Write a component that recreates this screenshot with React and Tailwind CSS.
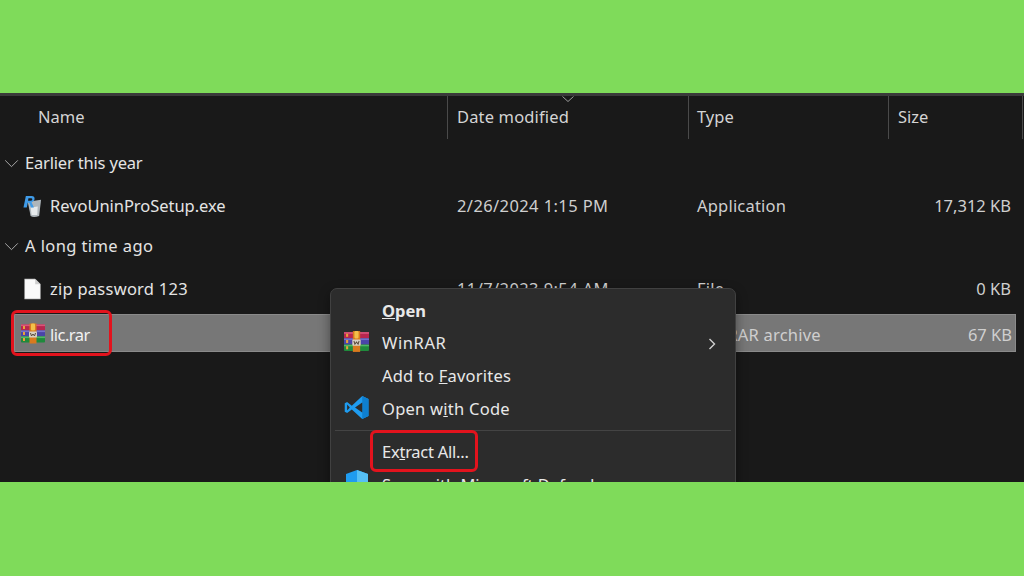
function RarIcon({ className }) {
  return (
    <svg viewBox="0 0 24 20" className={className}>
      <rect x="0" y="1" width="24" height="6" rx="0.8" fill="#b8264f" />
      <rect x="0" y="1" width="24" height="1.6" fill="#d9557a" />
      <rect x="0" y="7" width="24" height="6" fill="#4a45a8" />
      <rect x="0" y="7" width="24" height="1.6" fill="#7470cc" />
      <rect x="0" y="13" width="24" height="6" rx="0.8" fill="#1f8a3c" />
      <rect x="0" y="13" width="24" height="1.6" fill="#4fb865" />
      <rect x="2" y="2.5" width="2" height="3" fill="#e8a13a" />
      <rect x="2" y="8.5" width="2" height="3" fill="#e8a13a" />
      <rect x="2" y="14.5" width="2" height="3" fill="#e8a13a" />
      <rect x="8.5" y="0" width="7" height="20" fill="#d97a1e" />
      <rect x="10" y="0" width="4" height="7" rx="1" fill="#f2c04a" />
      <rect x="8" y="8" width="8" height="6" rx="1" fill="#d8d0c2" />
      <path d="M9.5 9.5 L10.5 12.5 L12 10.5 L13.5 12.5 L14.5 9.5" stroke="#5a4a3a" strokeWidth="1" fill="none" />
    </svg>
  );
}

function FileIcon() {
  return (
    <svg viewBox="0 0 16 20" className="w-[17px] h-[22px]">
      <path d="M0.5 0.5 H10.5 L15.5 5.5 V19.5 H0.5 Z" fill="#fafafa" stroke="#8a8a8a" strokeWidth="0.6" />
      <path d="M10.5 0.5 V5.5 H15.5 Z" fill="#cfcfcf" />
    </svg>
  );
}

function RevoIcon() {
  return (
    <svg viewBox="0 0 20 24" className="w-[19px] h-[23px]">
      <path d="M5 7 L19 5 L17 22 Q11 24 8 22 Z" fill="#aeb6bb" />
      <path d="M8 13 L15.5 12 L15 21 L9 21 Z" fill="#e6eaec" />
      <path d="M0.5 13 L3 1 H9 Q13 1 12 5 Q11.5 7 9 7.5 L11.5 13 H8.5 L6.5 8 H5 L4 13 Z M5.7 3.3 L5.3 6 H8 Q9.6 6 9.8 4.5 Q9.9 3.3 8.5 3.3 Z" fill="#3f9be8" fillRule="evenodd" />
    </svg>
  );
}

function VsCodeIcon() {
  return (
    <svg viewBox="0 0 24 24" className="w-[25px] h-[25px]">
      <path d="M17.5 1 L23.5 3.8 V20.2 L17.5 23 L7.5 13.8 L3 17.2 L0.7 16 V8 L3 6.8 L7.5 10.2 Z M17.8 7 L10.6 12 L17.8 17 Z M3 9.2 V14.8 L5.6 12 Z" fill="#1f9cf0" fillRule="evenodd" />
      <path d="M17.5 1 L23.5 3.8 V20.2 L17.5 23 Z M17.8 7 V17 L17.5 16.8 V7.2 Z" fill="#0e7fd0" fillRule="evenodd" />
    </svg>
  );
}

function ShieldIcon() {
  return (
    <svg viewBox="0 0 24 28" className="w-[24px] h-[28px]">
      <path d="M12 0 L23 4 V14 Q23 23 12 28 Q1 23 1 14 V4 Z" fill="#1f9cf0" />
      <path d="M12 0 L23 4 V12 H12 Z" fill="#56c0f5" />
      <path d="M1 12 H12 V28 Q1 23 1 14 Z" fill="#0f78c8" />
    </svg>
  );
}

function Chevron() {
  return (
    <svg viewBox="0 0 16 10" className="w-[15px] h-[9px]" fill="none" stroke="#a8a8a8" strokeWidth="1.1">
      <path d="M1 1.5 L8 8.5 L15 1.5" />
    </svg>
  );
}

const rowCols = "grid grid-cols-[433px_241px_200px_128px] items-center";

function Group({ label, labelClass = "", className = "" }) {
  return (
    <div className={`flex items-center h-[38px] pl-[4px] gap-[6px] ${className}`}>
      <Chevron />
      <span className={`text-[#e4e4e4] ${labelClass}`}>{label}</span>
    </div>
  );
}

function Row({ icon, name, nameClass = "", date, type, size, selected, className = "" }) {
  const textPad = selected ? "pt-[5px]" : "";
  return (
    <div className={`${rowCols} h-[38px] ${selected ? "bg-[#777777] border border-[#8a8a8a]" : ""} ${className}`}>
      <div className="flex items-center">
        <span className={`flex justify-center shrink-0 ${selected ? "w-[35px]" : "w-[36px]"}`}>{icon}</span>
        <span className={`${selected ? "text-[#f2f2f2]" : "text-[#e4e4e4]"} ${textPad} ${nameClass}`}>{name}</span>
      </div>
      <span className="pl-[10px] text-[#cfcfcf] whitespace-nowrap tracking-[0.4px]">{date}</span>
      <span className={`text-[#cfcfcf] whitespace-nowrap tracking-[0.2px] ${selected ? "pl-[8px]" : "pl-[9px]"} ${textPad}`}>{type}</span>
      <span className={`text-right pr-[5px] text-[#cfcfcf] whitespace-nowrap ${textPad}`}>{size}</span>
    </div>
  );
}

function HeaderCell({ children, className = "" }) {
  return (
    <div className={`h-[43px] flex items-center text-[#d4d4d4] ${className}`}>{children}</div>
  );
}

function MenuItem({ icon, children, arrow, className = "", textClass = "" }) {
  return (
    <div className={`flex items-center h-[33px] text-[#e8e8e8] ${className}`}>
      <span className="w-[51px] flex justify-center shrink-0 pb-[4px]">{icon}</span>
      <span className={`flex-1 whitespace-nowrap ${textClass}`}>{children}</span>
      {arrow && (
        <svg viewBox="0 0 8 12" className="w-[8px] h-[12px] mr-[19px]" fill="none" stroke="#d0d0d0" strokeWidth="1.4">
          <path d="M1.5 1 L6.5 6 L1.5 11" />
        </svg>
      )}
    </div>
  );
}

export default function App() {
  return (
    <div className="w-[1024px] h-[576px] flex flex-col overflow-hidden bg-[#7fdb5a] text-[16.5px] font-['Noto_Sans','Open_Sans',sans-serif]">
      <div className="h-[93px] shrink-0 bg-[#7fdb5a]" />
      <div className="relative h-[389px] shrink-0 bg-[#191919] border-t-[3px] border-[#3a3a3a] overflow-hidden">
        <div className="relative grid grid-cols-[447px_241px_200px_134px_2px] mb-[5px]">
          <HeaderCell className="pl-[38px]">Name</HeaderCell>
          <HeaderCell className="pl-[9px] border-l border-[#4a4a4a] tracking-[0.15px]">Date modified</HeaderCell>
          <HeaderCell className="pl-[8px] border-l border-[#4a4a4a]">Type</HeaderCell>
          <HeaderCell className="pl-[9px] border-l border-[#4a4a4a]">Size</HeaderCell>
          <HeaderCell className="border-l border-[#4a4a4a]" />
          <svg viewBox="0 0 12 6" className="absolute left-[562px] top-[0px] w-[12px] h-[6px]" fill="none" stroke="#9a9a9a" strokeWidth="1">
            <path d="M0.5 0.5 L6 5.5 L11.5 0.5" />
          </svg>
        </div>
        <Group label="Earlier this year" labelClass="tracking-[-0.18px]" />
        <div className="pl-[14px] pr-[8px] mt-[5px]">
          <Row icon={<RevoIcon />} name="RevoUninProSetup.exe" nameClass="tracking-[-0.05px]" date="2/26/2024 1:15 PM" type="Application" size="17,312 KB" />
        </div>
        <Group label="A long time ago" labelClass="tracking-[0.4px]" className="mt-[2px]" />
        <div className="pl-[14px] pr-[8px] mt-[5px]">
          <Row icon={<FileIcon />} name="zip password 123" nameClass="tracking-[0.25px]" date="11/7/2023 9:54 AM" type="File" size="0 KB" />
          <Row selected className="mt-[6px]" icon={<RarIcon className="w-[24px] h-[21px]" />} name="lic.rar" nameClass="tracking-[-0.5px]" date="" type="WinRAR archive" size="67 KB" />
        </div>

        <div className="absolute left-[11px] top-[214px] w-[101px] h-[46px] rounded-[6px] border-[3px] border-[#e3131d]" />

        <div className="absolute left-[330px] top-[192px] w-[406px] h-[240px] rounded-[7px] bg-[#2c2c2c] border border-[#414141] pt-[5px] shadow-[0_4px_12px_rgba(0,0,0,0.4)]">
          <MenuItem className="font-bold pt-[2px]">
            <u>O</u>pen
          </MenuItem>
          <MenuItem icon={<RarIcon className="w-[25px] h-[21px]" />} arrow textClass="tracking-[0.6px]">WinRAR</MenuItem>
          <MenuItem textClass="tracking-[0.2px]">
            Add to <u>F</u>avorites
          </MenuItem>
          <MenuItem icon={<VsCodeIcon />} textClass="tracking-[0.25px]">
            Open w<u>i</u>th Code
          </MenuItem>
          <div className="h-px bg-[#444444] mx-[4px] my-[4px]" />
          <MenuItem className="mt-[5px]" textClass="tracking-[-0.25px]">
            Ex<u>t</u>ract All...
          </MenuItem>
          <MenuItem icon={<ShieldIcon />}>Scan with Microsoft Defender...</MenuItem>
        </div>

        <div className="absolute left-[370px] top-[334px] w-[108px] h-[42px] rounded-[6px] border-[3px] border-[#e3131d]" />
      </div>
      <div className="flex-1 bg-[#7fdb5a]" />
    </div>
  );
}
